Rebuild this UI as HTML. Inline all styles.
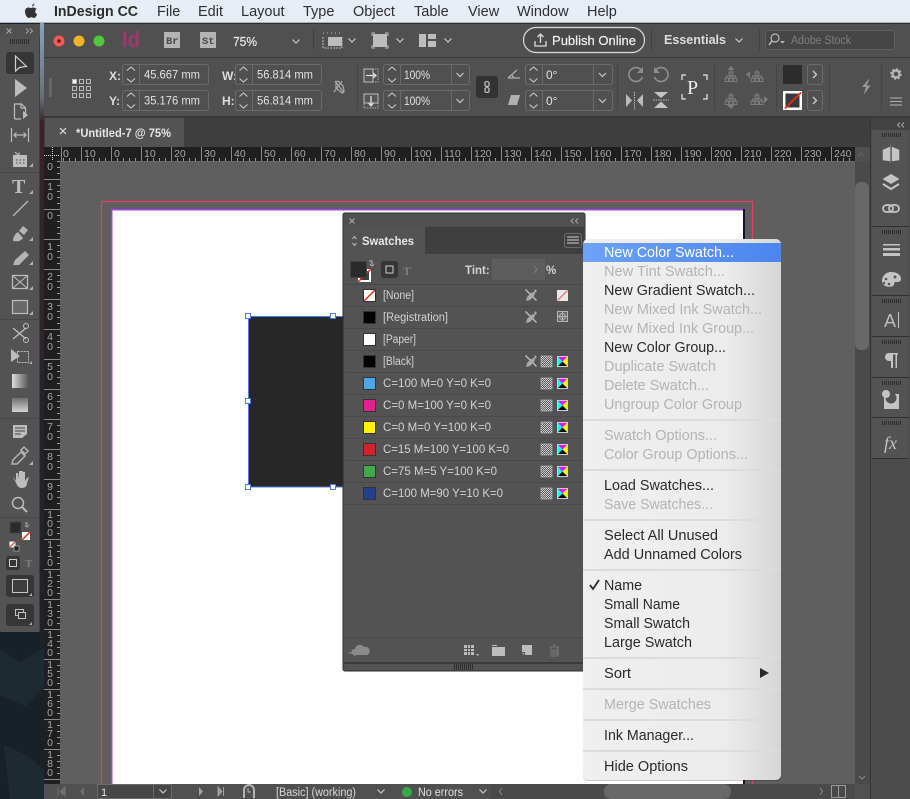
<!DOCTYPE html>
<html><head><meta charset="utf-8"><title>InDesign CC</title>
<style>
html,body{margin:0;padding:0;background:#1d272c;width:910px;height:799px;overflow:hidden}
svg{display:block;font-family:"Liberation Sans",sans-serif}
.d{font-size:14.5px;fill:#b4b4b4}
.b{font-size:14.5px;fill:#2a2a2a}
.f{font-size:12px;fill:#e2e2e2}
.l{font-size:12px;fill:#dcdcdc;font-weight:bold}
.s{font-size:11.5px;fill:#d2d2d2}
.r{font-size:10.5px;fill:#a8a8a8}
</style></head><body>
<svg width="910" height="799" viewBox="0 0 910 799" xmlns="http://www.w3.org/2000/svg">
<defs>
<linearGradient id="mg" x1="0" x2="1" y1="0" y2="0"><stop offset="0" stop-color="#efefef"/><stop offset=".72" stop-color="#ececec"/><stop offset="1" stop-color="#d6d6d6"/></linearGradient>
<linearGradient id="hl" x1="0" x2="1"><stop offset="0" stop-color="#6ea2f6"/><stop offset="1" stop-color="#4a86ef"/></linearGradient>
<linearGradient id="grad" x1="0" x2="1"><stop offset="0" stop-color="#dcdcdc"/><stop offset="1" stop-color="#5a5a5a"/></linearGradient>
<linearGradient id="grad2" x1="0" x2="0" y1="0" y2="1"><stop offset="0" stop-color="#707070"/><stop offset="1" stop-color="#d4d4d4"/></linearGradient>
<linearGradient id="left" x1="0" x2="0" y1="0" y2="1"><stop offset="0" stop-color="#8aa3b8"/><stop offset=".12" stop-color="#66707c"/><stop offset=".16" stop-color="#3a2228"/><stop offset=".5" stop-color="#33242c"/><stop offset=".6" stop-color="#1d272d"/><stop offset="1" stop-color="#1a2429"/></linearGradient>
<pattern id="tt" width="6" height="14" patternUnits="userSpaceOnUse" x="51" y="147"><rect x="0" y="11" width="1" height="3" fill="#9a9a9a"/></pattern>
<pattern id="tl" width="16" height="6" patternUnits="userSpaceOnUse" x="44" y="149"><rect x="13" y="0" width="3" height="1" fill="#9a9a9a"/></pattern>
<pattern id="grip" width="2" height="6" patternUnits="userSpaceOnUse"><rect width="1" height="6" fill="#2e2e2e"/></pattern>
<pattern id="chk" width="2" height="2" patternUnits="userSpaceOnUse"><rect width="2" height="2" fill="#d0d0d0"/><rect width="1" height="1" fill="#555"/><rect x="1" y="1" width="1" height="1" fill="#555"/></pattern>
<g id="cmyk"><rect width="11" height="11" fill="#cfcfcf"/><path d="M1 1h9L5.500 5.500z" fill="#f0f"/><path d="M1 1v9L5.500 5.500z" fill="#0ff"/><path d="M10 1v9L5.500 5.500z" fill="#ff0"/><path d="M1 10h9L5.500 5.500z" fill="#000"/></g>
<g id="proc"><rect width="11" height="11" fill="url(#chk)" stroke="#c4c4c4" stroke-width=".6"/></g>
<g id="pen"><path d="M0.500 0.500L11.500 11.500" stroke="#bcbcbc" stroke-width="1.400" fill="none"/><path d="M10 0l2 2-2 2-1 3-4 4-4 1 1-4 4-4 3-1z" fill="#a9a9a9"/></g>
<g id="tree"><path d="M6 0v4M1.500 9V6h9v3M6 4v5" stroke="#7d7d7d" fill="none"/><rect x="4" y="2" width="4" height="3.500" fill="none" stroke="#7d7d7d"/><rect y="8" width="3.500" height="3.500" fill="none" stroke="#7d7d7d"/><rect x="4.200" y="8" width="3.500" height="3.500" fill="none" stroke="#7d7d7d"/><rect x="8.500" y="8" width="3.500" height="3.500" fill="none" stroke="#7d7d7d"/></g>
<g id="stepper"><path d="M-4 -4l4 -3.500l4 3.500M-4 4l4 3.500l4 -3.500" fill="none" stroke="#c8c8c8" stroke-width="1.100"/></g>
<path id="chev" d="M-3.500 -1.500L0 2L3.500 -1.500" fill="none" stroke="#c8c8c8" stroke-width="1.200"/>
<path id="rchev" d="M-1.500 -3.500L2 0L-1.500 3.500" fill="none" stroke="#d0d0d0" stroke-width="1.300"/>
</defs>

<!-- desktop -->
<rect width="910" height="799" fill="#182127"/>
<path d="M0 650l20 12 24-14v40l-18 18-26-10zM4 745l22 10 18 14v30H10z" fill="#1d2a31"/>
<rect x="40" y="23" width="5" height="620" fill="url(#left)"/>

<!-- menu bar -->
<rect width="910" height="23" fill="#e6edf5"/>
<rect y="22" width="910" height="1" fill="#a9b2ba"/>
<path d="M32 6.500c.2-1.400 1.100-2.500 2.300-3 .1 1.500-1 2.800-2.300 3zM35.300 8.200c-1.200-.9-2.700-.9-3.500-.4-.8.3-1.300.5-2 0-1.900-1-4.800.2-4.800 3.700 0 3.300 2.300 6.500 3.800 6.500.9 0 1.400-.7 2.600-.7s1.600.7 2.600.7c1.400 0 2.800-2.500 3.100-3.700-2.300-1-2.600-4.500-.2-5.500z" fill="#333"/>
<text x="54" y="16" font-size="14.500" font-weight="bold" fill="#2c2c2c" textLength="84" lengthAdjust="spacingAndGlyphs">InDesign CC</text>
<g font-size="14.500" fill="#2e2e2e">
<text x="157" y="16">File</text><text x="198" y="16">Edit</text><text x="241" y="16">Layout</text><text x="303" y="16">Type</text><text x="353" y="16">Object</text><text x="414" y="16">Table</text><text x="468" y="16">View</text><text x="517" y="16">Window</text><text x="587" y="16">Help</text>
</g>

<!-- app window -->
<rect x="44" y="23" width="866" height="776" fill="#505050"/>
<rect x="44" y="23" width="866" height="1" fill="#2e2e2e"/>
<rect x="44" y="57" width="866" height="1" fill="#3a3a3a"/>
<rect x="44" y="116" width="866" height="2" fill="#3a3a3a"/>

<!-- title bar -->
<circle cx="59" cy="41" r="5.500" fill="#ee5d50" stroke="#d24a40" stroke-width=".5"/><circle cx="59" cy="41" r="1.800" fill="#6a1510"/>
<circle cx="79" cy="41" r="5.500" fill="#f3b42a"/>
<circle cx="99" cy="41" r="5.500" fill="#4fc83c"/>
<text x="122" y="47" font-size="22" font-weight="bold" fill="#9c3a6c" textLength="18" lengthAdjust="spacingAndGlyphs">Id</text>
<rect x="164" y="32" width="16" height="16" fill="#b4b4b4"/><text x="166" y="44" font-size="10.500" font-weight="bold" fill="#4a4a4a" font-family="Liberation Mono">Br</text>
<rect x="200" y="32" width="16" height="16" fill="#b4b4b4"/><text x="202" y="44" font-size="10.500" font-weight="bold" fill="#4a4a4a" font-family="Liberation Mono">St</text>
<text x="233" y="46" font-size="13" fill="#eaeaea" stroke="#eaeaea" stroke-width=".2" textLength="24" lengthAdjust="spacingAndGlyphs">75%</text>
<use href="#chev" x="296" y="41"/>
<rect x="313" y="29" width="1" height="20" fill="#414141"/>
<path d="M323 37v11h19V37M323 33h1M327 33h1M331 33h1M335 33h1M339 33h1" stroke="#bdbdbd" fill="none" stroke-dasharray="2 1"/><rect x="328" y="37" width="14" height="9" fill="#bdbdbd"/>
<use href="#chev" x="352" y="40"/>
<rect x="373" y="34" width="14" height="13" fill="#bdbdbd"/><path d="M372 36v-3h3M385 33h3v3M372 45v3h3M385 48h3v-3" fill="none" stroke="#bdbdbd" stroke-width="1"/>
<use href="#chev" x="400" y="40"/>
<path d="M419 34h7v13h-7zM428 34h8v5h-8zM428 41h8v6h-8z" fill="#bdbdbd"/>
<use href="#chev" x="448" y="40"/>

<rect x="523.500" y="27.500" width="121" height="25" rx="12.500" fill="#4a4a4a" stroke="#dddddd" stroke-width="1.200"/>
<path d="M535 41v5h11v-5M540.500 43v-9M537.500 37l3-3 3 3" fill="none" stroke="#dcdcdc" stroke-width="1.300"/>
<text x="552" y="45" font-size="13" fill="#f0f0f0" stroke="#f0f0f0" stroke-width=".2" textLength="84" lengthAdjust="spacingAndGlyphs">Publish Online</text>
<rect x="651" y="30" width="1" height="20" fill="#414141"/>
<text x="664" y="44" font-size="13" font-weight="bold" fill="#dcdcdc" textLength="62" lengthAdjust="spacingAndGlyphs">Essentials</text>
<use href="#chev" x="739" y="40"/>
<rect x="759" y="30" width="1" height="20" fill="#414141"/>
<rect x="765.500" y="30.500" width="129" height="19" rx="2" fill="#464646" stroke="#5f5f5f"/>
<circle cx="775" cy="38" r="4" fill="none" stroke="#b8b8b8" stroke-width="1.200"/><path d="M772 41l-3 4" stroke="#b8b8b8" stroke-width="1.500"/><path d="M780 41h5l-2.500 2.500z" fill="#b8b8b8"/>
<text x="791" y="44" font-size="11.500" fill="#7f7f7f" textLength="60" lengthAdjust="spacingAndGlyphs">Adobe Stock</text>

<!-- control panel -->
<rect x="49" y="78" width="3" height="19" fill="#777" opacity=".6"/>
<g fill="none" stroke="#b8b8b8" stroke-width="1"><rect x="72.500" y="79.500" width="4" height="4" fill="#fff"/><rect x="79.500" y="79.500" width="4" height="4"/><rect x="86.500" y="79.500" width="4" height="4"/><rect x="72.500" y="86.500" width="4" height="4"/><rect x="79.500" y="86.500" width="4" height="4"/><rect x="86.500" y="86.500" width="4" height="4"/><rect x="72.500" y="93.500" width="4" height="4"/><rect x="79.500" y="93.500" width="4" height="4"/><rect x="86.500" y="93.500" width="4" height="4"/></g>
<g class="l"><text x="109" y="80">X:</text><text x="109" y="105">Y:</text><text x="222" y="80">W:</text><text x="222" y="105">H:</text></g>
<g fill="#505050" stroke="#6a6a6a"><rect x="122.500" y="64.500" width="86" height="20" rx="2.500"/><rect x="122.500" y="90.500" width="86" height="20" rx="2.500"/><rect x="235.500" y="64.500" width="86" height="20" rx="2.500"/><rect x="235.500" y="90.500" width="86" height="20" rx="2.500"/><rect x="383.500" y="64.500" width="86" height="20" rx="2.500"/><rect x="383.500" y="90.500" width="86" height="20" rx="2.500"/><rect x="525.500" y="64.500" width="87" height="20" rx="2.500"/><rect x="525.500" y="90.500" width="87" height="20" rx="2.500"/></g>
<g fill="#6a6a6a"><rect x="139" y="65" width="1" height="19"/><rect x="139" y="91" width="1" height="19"/><rect x="252" y="65" width="1" height="19"/><rect x="252" y="91" width="1" height="19"/><rect x="400" y="65" width="1" height="19"/><rect x="400" y="91" width="1" height="19"/><rect x="451" y="65" width="1" height="19"/><rect x="451" y="91" width="1" height="19"/><rect x="542" y="65" width="1" height="19"/><rect x="542" y="91" width="1" height="19"/><rect x="593" y="65" width="1" height="19"/><rect x="593" y="91" width="1" height="19"/></g>
<use href="#stepper" x="131" y="74.500"/><use href="#stepper" x="131" y="100.500"/><use href="#stepper" x="243.500" y="74.500"/><use href="#stepper" x="243.500" y="100.500"/><use href="#stepper" x="392" y="74.500"/><use href="#stepper" x="392" y="100.500"/><use href="#stepper" x="533.500" y="74.500"/><use href="#stepper" x="533.500" y="100.500"/>
<use href="#chev" x="460" y="74.500"/><use href="#chev" x="460" y="100.500"/><use href="#chev" x="602.500" y="74.500"/><use href="#chev" x="602.500" y="100.500"/>
<g class="f"><text x="144" y="78.500" textLength="56" lengthAdjust="spacingAndGlyphs">45.667 mm</text><text x="144" y="104.500" textLength="56" lengthAdjust="spacingAndGlyphs">35.176 mm</text><text x="257" y="78.500" textLength="56" lengthAdjust="spacingAndGlyphs">56.814 mm</text><text x="257" y="104.500" textLength="56" lengthAdjust="spacingAndGlyphs">56.814 mm</text><text x="404" y="79" textLength="26" lengthAdjust="spacingAndGlyphs">100%</text><text x="404" y="105" textLength="26" lengthAdjust="spacingAndGlyphs">100%</text><text x="546" y="79">0°</text><text x="546" y="105">0°</text></g>
<path d="M335 81l9 12M336 82v6l6 5 2-2-1-5-5-5zM334 92l8-11" fill="none" stroke="#a6a6a6" stroke-width="1.300"/>
<rect x="357" y="64" width="1" height="46" fill="#444"/>
<rect x="365" y="69" width="13" height="13" fill="none" stroke="#aaa" stroke-dasharray="1.500 1"/><rect x="364" y="69" width="9" height="13" fill="#555" stroke="#bbb"/><path d="M366 75.500h9M373 73l3 2.500-3 2.500" stroke="#ddd" fill="none" stroke-width="1.300"/>
<rect x="364" y="94" width="14" height="14" fill="none" stroke="#aaa" stroke-dasharray="1.500 1"/><rect x="364" y="94" width="14" height="9" fill="#555" stroke="#bbb"/><path d="M371 96v9M368.500 103l2.500 3 2.500-3" stroke="#ddd" fill="none" stroke-width="1.300"/>
<rect x="476" y="76" width="22" height="22" rx="2.500" fill="#333"/>
<path d="M485 82.500a2.500 2.500 0 0 1 4 0v3a2.500 2.500 0 0 1-4 0zM485 88.500a2.500 2.500 0 0 1 4 0v3a2.500 2.500 0 0 1-4 0z" fill="none" stroke="#bcbcbc" stroke-width="1.300"/>
<path d="M508 78h12M508 78l9-8M514 78l-2-3" fill="none" stroke="#b0b0b0" stroke-width="1.200"/>
<path d="M508 105l3-10h9l-3 10z" fill="#b0b0b0"/>
<rect x="617" y="64" width="1" height="46" fill="#444"/>
<g fill="none" stroke="#8f8f8f" stroke-width="1.600"><path d="M642 71a7 7 0 1 0 .5 6"/><path d="M655 71a7 7 0 1 1-.5 6"/></g>
<path d="M643 67v6h-6zM654 67v6h6z" fill="#8f8f8f"/>
<path d="M626 94v13l6-6.500zM643 94v13l-6-6.500z" fill="#bbb"/><path d="M634.500 92v18" stroke="#bbb" stroke-dasharray="1.500 1"/>
<path d="M654 92h14l-7 6zM654 108h14l-7-6.500z" fill="#c4c4c4"/><path d="M653 100h16" stroke="#bbb" stroke-dasharray="1.500 1"/>
<path d="M682 80v-5h4M703 75h4v5M682 94v5h4M703 99h4v-5" fill="none" stroke="#e8e8e8" stroke-width="1.200"/>
<text x="687" y="94" font-family="Liberation Serif" font-size="20" fill="#ececec">P</text>
<rect x="714" y="64" width="1" height="46" fill="#444"/>
<use href="#tree" x="725" y="70"/><path d="M727.500 70l3.500-4 3.500 4z" fill="#7d7d7d"/>
<use href="#tree" x="751" y="70"/><path d="M750 71v7l-4-3.500z" fill="#7d7d7d"/>
<use href="#tree" x="725" y="93"/><path d="M727.500 105h7l-3.500 4z" fill="#7d7d7d"/>
<use href="#tree" x="751" y="93"/><path d="M764 96v7l4-3.500z" fill="#7d7d7d"/>
<rect x="776" y="64" width="1" height="46" fill="#444"/>
<rect x="783" y="65" width="19" height="19" fill="#2c2c2c"/>
<rect x="783" y="91" width="19" height="19" fill="#fff"/><rect x="785.500" y="93.500" width="14" height="14" fill="#3a3a3a"/><path d="M785 108.500L801 92.500" stroke="#f02a10" stroke-width="1.800"/>
<rect x="807.500" y="64.500" width="15" height="20" rx="2.500" fill="#505050" stroke="#6a6a6a"/><rect x="807.500" y="90.500" width="15" height="20" rx="2.500" fill="#505050" stroke="#6a6a6a"/>
<use href="#rchev" x="814.500" y="74.500"/><use href="#rchev" x="814.500" y="100.500"/>
<rect x="829" y="64" width="1" height="46" fill="#444"/>
<path d="M869 79l-7 8h4l-2.500 8 7-9.500h-4l3-6.500z" fill="#9c9c9c"/>
<rect x="881" y="64" width="1" height="46" fill="#444"/>
<circle cx="896" cy="74" r="3.500" fill="none" stroke="#b4b4b4" stroke-width="2.500"/><circle cx="896" cy="74" r="5" fill="none" stroke="#b4b4b4" stroke-width="1.500" stroke-dasharray="2 1.900"/>
<path d="M890 98h12M890 101.500h12M890 105h12" stroke="#b4b4b4" stroke-width="1"/>

<!-- tabs -->
<rect x="44" y="118" width="827" height="29" fill="#3e3e3e"/>
<rect x="45" y="118" width="139" height="29" fill="#535353"/>
<path d="M60 128l6 6M66 128l-6 6" stroke="#e0e0e0" stroke-width="1.200"/>
<text x="76" y="137" font-size="12" font-weight="bold" fill="#e6e6e6" textLength="95" lengthAdjust="spacingAndGlyphs">*Untitled-7 @ 75%</text>

<!-- pasteboard -->
<rect x="60" y="161" width="795" height="623" fill="#5f5f5f"/>
<!-- rulers -->
<rect x="44" y="147" width="811" height="14" fill="#1f1f1f"/>
<rect x="60" y="147" width="795" height="14" fill="url(#tt)"/>
<rect x="44" y="161" width="16" height="623" fill="#1f1f1f"/>
<rect x="44" y="161" width="16" height="623" fill="url(#tl)"/>
<rect x="60" y="161" width="795" height="1" fill="#6a6a6a"/>
<path d="M44 155.500h15M52.500 147v14" stroke="#ddd" stroke-dasharray="1 1"/>
<g fill="#8a8a8a"><rect x="61" y="147" width="1" height="14"/><rect x="81" y="147" width="1" height="14"/><rect x="111" y="147" width="1" height="14"/><rect x="141" y="147" width="1" height="14"/><rect x="171" y="147" width="1" height="14"/><rect x="201" y="147" width="1" height="14"/><rect x="231" y="147" width="1" height="14"/><rect x="261" y="147" width="1" height="14"/><rect x="291" y="147" width="1" height="14"/><rect x="321" y="147" width="1" height="14"/><rect x="351" y="147" width="1" height="14"/><rect x="381" y="147" width="1" height="14"/><rect x="411" y="147" width="1" height="14"/><rect x="441" y="147" width="1" height="14"/><rect x="471" y="147" width="1" height="14"/><rect x="501" y="147" width="1" height="14"/><rect x="531" y="147" width="1" height="14"/><rect x="561" y="147" width="1" height="14"/><rect x="591" y="147" width="1" height="14"/><rect x="621" y="147" width="1" height="14"/><rect x="651" y="147" width="1" height="14"/><rect x="681" y="147" width="1" height="14"/><rect x="711" y="147" width="1" height="14"/><rect x="741" y="147" width="1" height="14"/><rect x="771" y="147" width="1" height="14"/><rect x="801" y="147" width="1" height="14"/><rect x="831" y="147" width="1" height="14"/></g>
<g class="r"><text x="63" y="157">0</text><text x="84" y="157">10</text><text x="114" y="157">0</text><text x="144" y="157">10</text><text x="174" y="157">20</text><text x="204" y="157">30</text><text x="234" y="157">40</text><text x="264" y="157">50</text><text x="294" y="157">60</text><text x="324" y="157">70</text><text x="354" y="157">80</text><text x="384" y="157">90</text><text x="414" y="157">100</text><text x="444" y="157">110</text><text x="474" y="157">120</text><text x="504" y="157">130</text><text x="534" y="157">140</text><text x="564" y="157">150</text><text x="594" y="157">160</text><text x="624" y="157">170</text><text x="654" y="157">180</text><text x="684" y="157">190</text><text x="714" y="157">200</text><text x="744" y="157">210</text><text x="774" y="157">220</text><text x="804" y="157">230</text><text x="834" y="157">240</text></g>
<g fill="#8a8a8a"><rect x="44" y="179" width="16" height="1"/><rect x="44" y="209" width="16" height="1"/><rect x="44" y="239" width="16" height="1"/><rect x="44" y="269" width="16" height="1"/><rect x="44" y="299" width="16" height="1"/><rect x="44" y="329" width="16" height="1"/><rect x="44" y="359" width="16" height="1"/><rect x="44" y="389" width="16" height="1"/><rect x="44" y="419" width="16" height="1"/><rect x="44" y="449" width="16" height="1"/><rect x="44" y="479" width="16" height="1"/><rect x="44" y="509" width="16" height="1"/><rect x="44" y="539" width="16" height="1"/><rect x="44" y="569" width="16" height="1"/><rect x="44" y="599" width="16" height="1"/><rect x="44" y="629" width="16" height="1"/><rect x="44" y="659" width="16" height="1"/><rect x="44" y="689" width="16" height="1"/><rect x="44" y="719" width="16" height="1"/><rect x="44" y="749" width="16" height="1"/><rect x="44" y="779" width="16" height="1"/></g>
<g class="r" text-anchor="middle">
<text x="50" y="170">0</text>
<text x="50" y="190">1</text><text x="50" y="200">0</text>
<text x="50" y="219">0</text>
<text x="50" y="250">1</text><text x="50" y="260">0</text>
<text x="50" y="280">2</text><text x="50" y="290">0</text>
<text x="50" y="310">3</text><text x="50" y="320">0</text>
<text x="50" y="340">4</text><text x="50" y="350">0</text>
<text x="50" y="370">5</text><text x="50" y="380">0</text>
<text x="50" y="400">6</text><text x="50" y="410">0</text>
<text x="50" y="430">7</text><text x="50" y="440">0</text>
<text x="50" y="460">8</text><text x="50" y="470">0</text>
<text x="50" y="490">9</text><text x="50" y="500">0</text>
<text x="50" y="518">1</text><text x="50" y="527">0</text><text x="50" y="536">0</text>
<text x="50" y="548">1</text><text x="50" y="557">1</text><text x="50" y="566">0</text>
<text x="50" y="578">1</text><text x="50" y="587">2</text><text x="50" y="596">0</text>
<text x="50" y="608">1</text><text x="50" y="617">3</text><text x="50" y="626">0</text>
<text x="50" y="638">1</text><text x="50" y="647">4</text><text x="50" y="656">0</text>
<text x="50" y="668">1</text><text x="50" y="677">5</text><text x="50" y="686">0</text>
<text x="50" y="698">1</text><text x="50" y="707">6</text><text x="50" y="716">0</text>
<text x="50" y="728">1</text><text x="50" y="737">7</text><text x="50" y="746">0</text>
<text x="50" y="758">1</text><text x="50" y="767">8</text><text x="50" y="776">0</text>
</g>

<!-- page -->
<rect x="101.500" y="201.500" width="651" height="600" fill="none" stroke="#e63f63" stroke-width="1.300"/>
<rect x="111" y="209" width="633" height="590" fill="#fff"/>
<rect x="111" y="209" width="633" height="1.500" fill="#a040f0"/>
<rect x="111" y="209" width="1.500" height="590" fill="#a040f0"/>
<rect x="743" y="209" width="2" height="590" fill="#1a0a40"/>

<!-- object -->
<rect x="248.500" y="316.500" width="170" height="170.500" fill="#272727" stroke="#4a7df0"/>
<g fill="#fff" stroke="#4a7df0"><rect x="245.500" y="313.500" width="5" height="5"/><rect x="330.500" y="313.500" width="5" height="5"/><rect x="245.500" y="398.500" width="5" height="5"/><rect x="245.500" y="484.500" width="5" height="5"/><rect x="330.500" y="484.500" width="5" height="5"/></g>

<!-- swatches panel -->
<rect x="343" y="213" width="242" height="458" rx="2" fill="#535353" stroke="#2e2e2e"/>
<rect x="344" y="214" width="240" height="13" fill="#505050"/>
<path d="M349.500 218.500l5 5M354.500 218.500l-5 5" stroke="#a8a8a8" stroke-width="1.100"/>
<path d="M573.500 218.500l-2.500 2.500 2.500 2.500M578 218.500l-2.500 2.500 2.500 2.500" fill="none" stroke="#a8a8a8"/>
<rect x="344" y="227" width="240" height="27" fill="#3f3f3f"/>
<rect x="344" y="227" width="241" height="1" fill="#3a3a3a"/>
<rect x="344" y="227" width="81" height="27" fill="#535353"/>
<path d="M352.500 239l2-2.500 2 2.500M352.500 243l2 2.500 2-2.500" fill="none" stroke="#c8c8c8"/>
<text x="362" y="245" font-size="11.500" font-weight="bold" fill="#e6e6e6" textLength="52" lengthAdjust="spacingAndGlyphs">Swatches</text>
<rect x="564.500" y="233.500" width="17" height="14" rx="2" fill="#404040" stroke="#6a6a6a"/><path d="M567 237h12M567 240h12M567 243h12" stroke="#cfcfcf"/>
<!-- fill stroke -->
<rect x="358" y="269" width="13" height="13" fill="#fff"/><rect x="360" y="271" width="9" height="9" fill="#3a3a3a"/><path d="M358 282l13-13" stroke="#f02a10" stroke-width="1.500"/>
<rect x="350.500" y="261.500" width="16" height="16" fill="#2a2a2a" stroke="#444"/>
<path d="M369 261h3v3M374 264l-2 2-2-2" fill="none" stroke="#b8b8b8"/>
<rect x="381" y="261" width="17" height="17" rx="2.500" fill="#363636"/><rect x="386" y="266" width="7" height="7" fill="none" stroke="#d0d0d0"/>
<text x="403" y="275" font-family="Liberation Serif" font-weight="bold" font-size="12" fill="#7e7e7e">T</text>
<text x="465" y="274" class="s" font-weight="bold">Tint:</text>
<rect x="492" y="259" width="53" height="21" fill="#5d5d5d"/>
<path d="M534 266l3 3.500-3 3.500" fill="none" stroke="#7d7d7d" stroke-width="1.100"/>
<text x="546" y="274" class="s" font-weight="bold">%</text>

<!-- rows -->
<g fill="#494949"><rect x="345" y="284" width="238" height="1"/><rect x="345" y="306" width="238" height="1"/><rect x="345" y="328" width="238" height="1"/><rect x="345" y="350" width="238" height="1"/><rect x="345" y="372" width="238" height="1"/><rect x="345" y="394" width="238" height="1"/><rect x="345" y="416" width="238" height="1"/><rect x="345" y="438" width="238" height="1"/><rect x="345" y="460" width="238" height="1"/><rect x="345" y="482" width="238" height="1"/><rect x="345" y="504" width="238" height="1"/><rect x="345" y="637" width="238" height="1"/></g>
<g stroke="#333" stroke-width="1">
<rect x="363.500" y="289.500" width="12" height="12" fill="#fff"/>
<rect x="363.500" y="311.500" width="12" height="12" fill="#000"/>
<rect x="363.500" y="333.500" width="12" height="12" fill="#fff"/>
<rect x="363.500" y="355.500" width="12" height="12" fill="#000"/>
<rect x="363.500" y="377.500" width="12" height="12" fill="#4aa8ea"/>
<rect x="363.500" y="399.500" width="12" height="12" fill="#e6218c"/>
<rect x="363.500" y="421.500" width="12" height="12" fill="#fff200"/>
<rect x="363.500" y="443.500" width="12" height="12" fill="#d42127"/>
<rect x="363.500" y="465.500" width="12" height="12" fill="#40aa48"/>
<rect x="363.500" y="487.500" width="12" height="12" fill="#243f8e"/>
</g>
<path d="M364 301l11-11" stroke="#e8280c" stroke-width="1.500"/>
<g class="s">
<text x="383" y="299" textLength="31" lengthAdjust="spacingAndGlyphs">[None]</text><text x="383" y="321" textLength="65" lengthAdjust="spacingAndGlyphs">[Registration]</text><text x="383" y="343" textLength="33" lengthAdjust="spacingAndGlyphs">[Paper]</text><text x="383" y="365" textLength="31" lengthAdjust="spacingAndGlyphs">[Black]</text>
<text x="383" y="387" textLength="108" lengthAdjust="spacingAndGlyphs">C=100 M=0 Y=0 K=0</text>
<text x="383" y="409" textLength="108" lengthAdjust="spacingAndGlyphs">C=0 M=100 Y=0 K=0</text>
<text x="383" y="431" textLength="108" lengthAdjust="spacingAndGlyphs">C=0 M=0 Y=100 K=0</text>
<text x="383" y="453" textLength="126" lengthAdjust="spacingAndGlyphs">C=15 M=100 Y=100 K=0</text>
<text x="383" y="475" textLength="114" lengthAdjust="spacingAndGlyphs">C=75 M=5 Y=100 K=0</text>
<text x="383" y="497" textLength="120" lengthAdjust="spacingAndGlyphs">C=100 M=90 Y=10 K=0</text>
</g>
<use href="#pen" x="525" y="289"/><use href="#pen" x="525" y="311"/><use href="#pen" x="525" y="355"/>
<rect x="557" y="290" width="11" height="11" fill="#e8e8e8"/><path d="M557.500 300.500l10-10" stroke="#e05a50"/>
<rect x="557.500" y="311.500" width="10" height="10" fill="#666" stroke="#b4b4b4"/><circle cx="562.500" cy="316.500" r="3" fill="none" stroke="#b4b4b4"/><path d="M562.500 312v9M558 316.500h9" stroke="#b4b4b4"/>
<use href="#proc" x="541" y="356"/><use href="#proc" x="541" y="378"/><use href="#proc" x="541" y="400"/><use href="#proc" x="541" y="422"/><use href="#proc" x="541" y="444"/><use href="#proc" x="541" y="466"/><use href="#proc" x="541" y="488"/>
<use href="#cmyk" x="557" y="356"/><use href="#cmyk" x="557" y="378"/><use href="#cmyk" x="557" y="400"/><use href="#cmyk" x="557" y="422"/><use href="#cmyk" x="557" y="444"/><use href="#cmyk" x="557" y="466"/><use href="#cmyk" x="557" y="488"/>
<!-- panel footer -->
<path d="M349 653h7M354 650l3 3-3 3" stroke="#8a8a8a" fill="none" stroke-width="1.200"/>
<path d="M354 655a3 3 0 0 1 1-6 5 5 0 0 1 9-2 4 4 0 0 1 3 8z" fill="#8a8a8a"/>
<g fill="#bdbdbd"><rect x="464" y="645" width="10" height="10"/></g><path d="M467.500 645v10M470.500 645v10M464 648.500h10M464 651.500h10" stroke="#535353"/><path d="M476 654h3l-1.500 2z" fill="#bdbdbd"/>
<path d="M492 645h5v1h-5zM492 647h13v9h-13z" fill="#bdbdbd"/>
<path d="M522 645h10v10h-7v-3h-3z" fill="#bdbdbd"/><path d="M522 653l2 2v-2z" fill="#bdbdbd"/>
<path d="M550 647h9M551 647v9h7v-9M553 645h3M553 649v6M555 649v6M557 649v6" fill="none" stroke="#777"/>
<rect x="344" y="662" width="240" height="2" fill="#3a3a3a"/>
<rect x="454" y="664" width="20" height="6" fill="url(#grip)"/>

<!-- toolbar -->
<rect x="0" y="24" width="40" height="608" fill="#535353"/>
<rect x="39" y="24" width="1" height="608" fill="#3d3d3d"/>
<rect x="0" y="24" width="40" height="13" fill="#505050"/>
<path d="M6.500 28.500l5 5M11.500 28.500l-5 5" stroke="#a8a8a8"/><path d="M26 28.500l2.500 2.500-2.500 2.500M30 28.500l2.500 2.500-2.500 2.500" fill="none" stroke="#a8a8a8" stroke-width=".9"/>
<rect x="10" y="39" width="19" height="5" fill="url(#grip)"/>
<rect x="6" y="52" width="28" height="22" rx="2.500" fill="#363636"/>
<path d="M15.500 56v15l4-3.500 7-1z" fill="none" stroke="#cfcfcf" stroke-width="1.200"/>
<path d="M15 79v18l12-9z" fill="#bdbdbd"/>
<path d="M14.500 119v-15h7l4 4v5M21 104v4h4M14.500 119H21" fill="none" stroke="#bdbdbd" stroke-width="1.200"/><path d="M23 111v8l5-4z" fill="#bdbdbd"/>
<path d="M11.500 128v14M28.500 128v14M14 135h12M16.500 132.500L14 135l2.500 2.500M23.500 132.500L26 135l-2.500 2.500" fill="none" stroke="#bdbdbd" stroke-width="1.200"/>
<path d="M15 152l4 4M19 152.500v4h-4" fill="none" stroke="#bdbdbd" stroke-width="1.200"/><rect x="13" y="155" width="14" height="12" fill="#bdbdbd"/><path d="M16 160h1.500M19.500 160H21M23 160h1.500M16 163h1.500M19.500 163H21M23 163h1.500" stroke="#444"/><path d="M29 167h4v-4z" fill="#b0b0b0"/>
<rect x="0" y="172" width="39" height="1" fill="#474747"/>
<text x="12" y="193" font-family="Liberation Serif" font-weight="bold" font-size="20" fill="#bdbdbd">T</text><path d="M29 194h4v-4z" fill="#b0b0b0"/>
<path d="M13 216l15-15" stroke="#b8b8b8" stroke-width="1.300"/>
<path d="M13 241c0-5 3-8 5-9l5 6c-2 3-5 4-10 3zM19 231l4-5 5 4-4 5z" fill="#b4b4b4"/><path d="M29 241h4v-4z" fill="#b0b0b0"/>
<path d="M13 265l2-5 10-9 4 4-10 10z" fill="#b4b4b4"/><path d="M29 265h4v-4z" fill="#b0b0b0"/>
<rect x="12.500" y="275.500" width="15" height="13" fill="none" stroke="#bdbdbd" stroke-width="1.200"/><path d="M12.500 275.500l15 13M27.500 275.500l-15 13" stroke="#bdbdbd"/><path d="M29 290h4v-4z" fill="#b0b0b0"/>
<rect x="12.500" y="300.500" width="15" height="13" fill="#6a6a6a" stroke="#bdbdbd" stroke-width="1.200"/><path d="M29 315h4v-4z" fill="#b0b0b0"/>
<rect x="0" y="319" width="39" height="1" fill="#474747"/>
<path d="M13 328l13 11M13 339l13-11" stroke="#bdbdbd" stroke-width="1.400"/><circle cx="26" cy="326" r="2.500" fill="none" stroke="#bdbdbd"/><circle cx="26" cy="340" r="2.500" fill="none" stroke="#bdbdbd"/>
<path d="M11 349v13l9-6z" fill="#bdbdbd"/><rect x="17.500" y="351.500" width="11" height="11" fill="none" stroke="#bdbdbd" stroke-dasharray="2 1"/><path d="M29 364h3v-3z" fill="#b0b0b0"/>
<rect x="12" y="374" width="16" height="14" fill="url(#grad)"/>
<rect x="12" y="398" width="16" height="14" fill="url(#grad2)"/>
<rect x="0" y="418" width="39" height="1" fill="#474747"/>
<path d="M13 425h14v9l-5 4h-9z" fill="#bdbdbd"/><path d="M15 428h10M15 431h10M15 434h6" stroke="#444"/>
<path d="M12 464l1-4 8-8 4 4-8 8zM21 450l3-3 4 4-3 3z" fill="none" stroke="#b4b4b4" stroke-width="1.500"/><path d="M29 465h4v-4z" fill="#b0b0b0"/>
<path d="M13 477l4 8c1 2 3 3 5 3 3 0 5-2 5-5l2-6-2 1-2 3 0-9h-2v7-8h-2v8-8h-2v8l-1-6h-2l0 8-2-3z" fill="#bdbdbd"/>
<circle cx="18" cy="503" r="5.500" fill="none" stroke="#bdbdbd" stroke-width="1.400"/><path d="M22 507l5 5" stroke="#bdbdbd" stroke-width="2"/>
<rect x="0" y="517" width="39" height="1" fill="#474747"/>
<rect x="10" y="522" width="11" height="11" fill="#2a2a2a" stroke="#444"/>
<rect x="22" y="532" width="8" height="8" fill="#fff"/><path d="M22 540l8-8" stroke="#f02a10" stroke-width="1.500"/>
<path d="M25 523h2v2M29 525l-2 2-2-2" fill="none" stroke="#b0b0b0" stroke-width=".9"/>
<rect x="9.500" y="541.500" width="6" height="6" fill="#fff"/><path d="M9.500 547.500l6-6" stroke="#f02a10"/><rect x="14" y="546" width="5" height="5" fill="#222" stroke="#bbb" stroke-width=".7"/>
<rect x="6" y="556" width="14" height="14" rx="2.500" fill="#363636"/><rect x="9.500" y="559.500" width="7" height="7" fill="none" stroke="#cfcfcf"/>
<text x="25" y="567" font-family="Liberation Serif" font-weight="bold" font-size="11" fill="#7e7e7e">T</text>
<rect x="6" y="575" width="28" height="22" rx="2.500" fill="#363636"/><rect x="12.500" y="579.500" width="15" height="13" fill="#3d3d3d" stroke="#c8c8c8"/><path d="M29 596h3v-3z" fill="#b0b0b0"/>
<rect x="6" y="604" width="28" height="22" rx="2.500" fill="#363636"/><rect x="15.500" y="609.500" width="8" height="6" fill="none" stroke="#c0c0c0"/><rect x="18.500" y="612.500" width="7" height="6" fill="#363636" stroke="#c0c0c0"/><path d="M29 625h3v-3z" fill="#b0b0b0"/>

<!-- right scrollbar -->
<rect x="855" y="161" width="15" height="623" fill="#4a4a4a"/>
<rect x="855" y="182" width="14" height="168" rx="6" fill="#686868"/>
<path d="M858 156l3-3 3 3" fill="none" stroke="#666"/>
<path d="M859 776l3 3 3-3" fill="none" stroke="#8c8c8c"/>
<!-- dock -->
<rect x="870" y="118" width="40" height="681" fill="#4c4c4c"/>
<rect x="870" y="118" width="1" height="681" fill="#353535"/>
<rect x="871" y="118" width="39" height="12" fill="#424242"/>
<path d="M900 122.500l-2.500 2.500 2.500 2.500M904 122.500l-2.500 2.500 2.500 2.500" fill="none" stroke="#a8a8a8"/>
<rect x="872" y="130" width="37" height="96" fill="#535353"/><rect x="872" y="227" width="37" height="68" fill="#535353"/><rect x="872" y="296" width="37" height="40" fill="#535353"/><rect x="872" y="337" width="37" height="40" fill="#535353"/><rect x="872" y="378" width="37" height="39" fill="#535353"/><rect x="872" y="418" width="37" height="40" fill="#535353"/>
<g fill="#2f2f2f"><rect x="872" y="226" width="37" height="1"/><rect x="872" y="295" width="37" height="1"/><rect x="872" y="336" width="37" height="1"/><rect x="872" y="377" width="37" height="1"/><rect x="872" y="417" width="37" height="1"/><rect x="872" y="458" width="37" height="1"/></g>
<g><rect x="881" y="133" width="20" height="4" fill="url(#grip)"/><rect x="881" y="230" width="20" height="4" fill="url(#grip)"/><rect x="881" y="299" width="20" height="4" fill="url(#grip)"/><rect x="881" y="340" width="20" height="4" fill="url(#grip)"/><rect x="881" y="381" width="20" height="4" fill="url(#grip)"/><rect x="881" y="421" width="20" height="4" fill="url(#grip)"/></g>
<path d="M883 150l7-3v14l-7-1zM899 150l-7-3v14l7-1zM890.500 144v19" fill="#c4c4c4" stroke="#c4c4c4" stroke-width=".5"/><path d="M891 144v19" stroke="#535353"/>
<path d="M891 174l8.500 5-8.500 5-8.500-5z" fill="#c4c4c4"/><path d="M883 184l8 5 8-5" fill="none" stroke="#c4c4c4" stroke-width="2.200"/>
<rect x="883" y="205" width="10" height="7" rx="3.500" fill="none" stroke="#c4c4c4" stroke-width="1.800"/><rect x="889" y="205" width="10" height="7" rx="3.500" fill="none" stroke="#c4c4c4" stroke-width="1.800"/>
<path d="M883 244h17v1.500h-17zM883 248h17v2.500h-17zM883 253h17v3h-17z" fill="#c4c4c4"/>
<path d="M891 272c6 0 10 3 10 7 0 3-3 3-5 3-3 0-1 3-3 4-5 2-11 0-11-5 0-5 4-9 9-9z" fill="#c4c4c4"/><circle cx="886" cy="279" r="1.300" fill="#555"/><circle cx="889" cy="284" r="1.300" fill="#555"/><circle cx="884" cy="283" r="1.300" fill="#555"/><circle cx="895" cy="277" r="1.500" fill="#555"/>
<text x="884" y="327" font-size="18" fill="#bdbdbd">A</text><rect x="898" y="312" width="1" height="16" fill="#c4c4c4"/>
<path d="M889 353h9v1.500h-1V368h-1.500V354.500H893V368h-2v-7h-2a4 4 0 0 1 0-8z" fill="#c4c4c4"/>
<path d="M884 394h15v15h-15z" fill="#c4c4c4"/><circle cx="891" cy="398" r="5.500" fill="#535353"/><circle cx="886" cy="394" r="4" fill="#c4c4c4"/>
<text x="884" y="449" font-family="Liberation Serif" font-style="italic" font-size="18" fill="#c4c4c4">fx</text>

<!-- status bar -->
<rect x="44" y="784" width="826" height="15" fill="#505050"/>
<path d="M58 787v9M65 787v9l-5-4.500z" stroke="#707070" fill="#707070"/>
<path d="M84 787v9l-4-4.500z" fill="#707070"/>
<rect x="97.500" y="784.500" width="74" height="14" fill="#474747" stroke="#6a6a6a"/>
<text x="101" y="796" font-size="11" fill="#e0e0e0">1</text>
<rect x="153" y="785" width="1" height="14" fill="#6a6a6a"/>
<use href="#chev" x="163" y="791"/>
<path d="M199 787v9l4-4.500z" fill="#a0a0a0"/>
<path d="M218 787v9l4-4.500zM223.500 787v9" stroke="#a0a0a0" fill="#a0a0a0"/>
<path d="M244 798v-8a5 5 0 0 1 10 0v8" fill="none" stroke="#b4b4b4" stroke-width="2"/><path d="M248 788v4h3" stroke="#b4b4b4" fill="none"/>
<text x="276" y="796" font-size="11.500" fill="#d8d8d8" textLength="80" lengthAdjust="spacingAndGlyphs">[Basic] (working)</text>
<use href="#chev" x="381" y="791"/>
<circle cx="407" cy="792" r="5" fill="#37a84a"/>
<text x="418" y="796" font-size="11.500" fill="#e0e0e0" textLength="45" lengthAdjust="spacingAndGlyphs">No errors</text>
<use href="#chev" x="483" y="791"/>
<rect x="491" y="784" width="364" height="15" fill="#4a4a4a"/>
<path d="M502 788l-2.500 3.500 2.500 3.500M820 788l2.500 3.500-2.500 3.500" fill="none" stroke="#8c8c8c"/>
<rect x="604" y="784" width="127" height="15" rx="7" fill="#686868"/>
<rect x="831.500" y="785.500" width="7" height="12" fill="none" stroke="#9a9a9a"/><rect x="838.500" y="785.500" width="7" height="12" fill="none" stroke="#9a9a9a"/>

<!-- dropdown menu -->
<rect x="583" y="240" width="198" height="540" rx="5" fill="#000" opacity=".22" transform="translate(0 1)"/>
<rect x="583" y="239" width="198" height="541" rx="5" fill="url(#mg)"/>
<rect x="583" y="243" width="198" height="19" fill="url(#hl)"/>
<g fill="#dcdcdc"><rect x="583" y="419" width="198" height="2"/><rect x="583" y="469" width="198" height="2"/><rect x="583" y="519" width="198" height="2"/><rect x="583" y="569" width="198" height="2"/><rect x="583" y="657" width="198" height="2"/><rect x="583" y="688" width="198" height="2"/><rect x="583" y="719" width="198" height="2"/><rect x="583" y="750" width="198" height="2"/></g>
<text x="604" y="257" font-size="14.500" fill="#fff" textLength="130" lengthAdjust="spacingAndGlyphs">New Color Swatch...</text>
<text x="604" y="276" class="d" textLength="121" lengthAdjust="spacingAndGlyphs">New Tint Swatch...</text>
<text x="604" y="295" class="b" textLength="151" lengthAdjust="spacingAndGlyphs">New Gradient Swatch...</text>
<text x="604" y="314" class="d" textLength="158" lengthAdjust="spacingAndGlyphs">New Mixed Ink Swatch...</text>
<text x="604" y="333" class="d" textLength="150" lengthAdjust="spacingAndGlyphs">New Mixed Ink Group...</text>
<text x="604" y="352" class="b" textLength="122" lengthAdjust="spacingAndGlyphs">New Color Group...</text>
<text x="604" y="371" class="d" textLength="112" lengthAdjust="spacingAndGlyphs">Duplicate Swatch</text>
<text x="604" y="390" class="d" textLength="105" lengthAdjust="spacingAndGlyphs">Delete Swatch...</text>
<text x="604" y="409" class="d" textLength="138" lengthAdjust="spacingAndGlyphs">Ungroup Color Group</text>
<text x="604" y="440" class="d" textLength="113" lengthAdjust="spacingAndGlyphs">Swatch Options...</text>
<text x="604" y="459" class="d" textLength="144" lengthAdjust="spacingAndGlyphs">Color Group Options...</text>
<text x="604" y="490" class="b" textLength="110" lengthAdjust="spacingAndGlyphs">Load Swatches...</text>
<text x="604" y="509" class="d" textLength="109" lengthAdjust="spacingAndGlyphs">Save Swatches...</text>
<text x="604" y="540" class="b" textLength="114" lengthAdjust="spacingAndGlyphs">Select All Unused</text>
<text x="604" y="559" class="b" textLength="138" lengthAdjust="spacingAndGlyphs">Add Unnamed Colors</text>
<path d="M590 585l3 4 6-9" fill="none" stroke="#2a2a2a" stroke-width="1.800"/>
<text x="604" y="590" class="b" textLength="38" lengthAdjust="spacingAndGlyphs">Name</text>
<text x="604" y="609" class="b" textLength="76" lengthAdjust="spacingAndGlyphs">Small Name</text>
<text x="604" y="628" class="b" textLength="86" lengthAdjust="spacingAndGlyphs">Small Swatch</text>
<text x="604" y="647" class="b" textLength="88" lengthAdjust="spacingAndGlyphs">Large Swatch</text>
<text x="604" y="678" class="b" textLength="27" lengthAdjust="spacingAndGlyphs">Sort</text>
<path d="M760 668v10l9-5z" fill="#2a2a2a"/>
<text x="604" y="709" class="d" textLength="107" lengthAdjust="spacingAndGlyphs">Merge Swatches</text>
<text x="604" y="740" class="b" textLength="90" lengthAdjust="spacingAndGlyphs">Ink Manager...</text>
<text x="604" y="771" class="b" textLength="84" lengthAdjust="spacingAndGlyphs">Hide Options</text>
</svg>
</body></html>
